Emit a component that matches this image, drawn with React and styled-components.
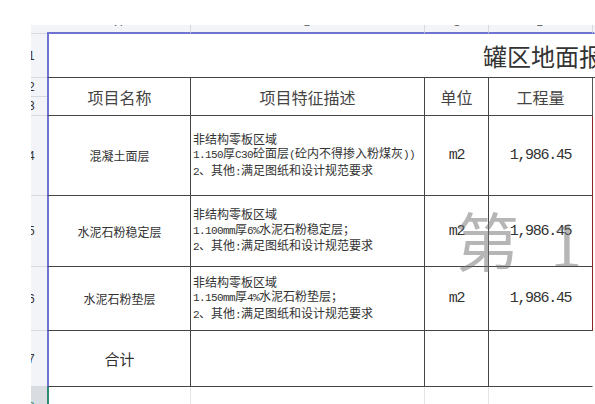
import React from "react";
import styled, { createGlobalStyle } from "styled-components";

const Global = createGlobalStyle`
  html, body { margin: 0; padding: 0; background: #fff; overflow: hidden; }
  body { font-family: "Noto Sans CJK SC", "Liberation Sans", sans-serif; color: #333; }
`;

const CJK = `"Noto Sans CJK SC", "Noto Sans CJK JP", sans-serif`;
const MONO = `"Liberation Mono", "Noto Sans CJK SC", monospace`;
const LINE = "#454545";
const BLUE = "#6f73d2";
const HDR_BG = "#f3f4f7";
const HDR_LINE = "#d6d9de";

const Page = styled.div`
  width: 595px;
  height: 404px;
  box-sizing: border-box;
  padding: 25px 0 0 31px;
  overflow: hidden;
`;

const Sheet = styled.div`
  position: relative;
  width: 564px;
  display: grid;
  grid-template-columns: 16px 144px 234px 64px 104px 1fr;
  grid-template-rows: 9px 44px 19px 19px 80px 71px 64px 56px 40px;
  & > * { box-sizing: border-box; min-width: 0; }
`;

const Corner = styled.div`
  background: ${HDR_BG};
  border-bottom: 1px solid ${HDR_LINE};
`;

const ColHead = styled.div`
  background: ${HDR_BG};
  border-right: 1px solid ${(p) => (p.$last ? "transparent" : HDR_LINE)};
  border-bottom: 2px solid ${BLUE};
  display: flex;
  justify-content: center;
  align-items: flex-start;
  overflow: hidden;
`;

const ColLetter = styled.span`
  font-family: "Liberation Sans", sans-serif;
  font-size: 11px;
  line-height: 11px;
  margin-top: -8px;
  color: #555;
`;

const RowHead = styled.div`
  background: ${(p) => (p.$active ? "#d9dce1" : HDR_BG)};
  border-bottom: 1px solid ${HDR_LINE};
  display: flex;
  align-items: center;
  overflow: hidden;
  color: ${(p) => (p.$active ? "#1f8a6e" : "#333")};
  font-family: "Liberation Sans", sans-serif;
  font-size: 12px;
`;

const RowNum = styled.span`
  margin-left: -3px;
`;

const Title = styled.div`
  grid-column: span 5;
  border-left: 2px solid ${BLUE};
  border-bottom: 1px solid ${LINE};
  display: flex;
  align-items: center;
  padding-left: 434px;
  white-space: nowrap;
  overflow: hidden;
  font-family: ${CJK};
  font-size: 24px;
  color: #333;
`;

const Cell = styled.div`
  border-right: 1px solid ${(p) => p.$rc || LINE};
  border-bottom: 1px solid ${LINE};
  border-left: ${(p) => (p.$first ? `2px solid ${BLUE}` : "none")};
  display: flex;
  align-items: center;
  justify-content: center;
  color: #333;
`;

const HeadCell = styled(Cell)`
  grid-row: span 2;
  font-family: ${CJK};
  font-size: 16px;
  color: #444;
`;

const NameCell = styled(Cell)`
  font-family: ${CJK};
  font-size: ${(p) => (p.$big ? "15px" : "12px")};
`;

const DescCell = styled(Cell)`
  flex-direction: column;
  align-items: flex-start;
  justify-content: center;
  padding-left: 2px;
  font-family: ${CJK};
  font-size: 12px;
  line-height: 14.5px;
  white-space: nowrap;
  overflow: hidden;
`;

const Lat = styled.span`
  font-family: "Liberation Mono", monospace;
  font-size: 11px;
  letter-spacing: -0.6px;
`;

const NumCell = styled(Cell)`
  font-family: ${MONO};
  font-size: 15px;
  letter-spacing: -1.3px;
`;

const Void = styled.div`
  grid-row: span ${(p) => p.$span || 1};
`;

const Blank = styled.div`
  border-right: 1px solid ${(p) => (p.$last ? "transparent" : "#e3e5e9")};
  border-left: ${(p) => (p.$first ? "2px solid #2c8a72" : "none")};
`;

const Watermark = styled.div`
  position: absolute;
  left: 424px;
  top: 181px;
  display: flex;
  align-items: baseline;
  line-height: 64px;
  font-size: 64px;
  color: rgba(110, 110, 110, 0.5);
  pointer-events: none;
`;

const WmChar = styled.span`
  font-family: ${CJK};
`;

const WmNum = styled.span`
  font-family: "Liberation Serif", serif;
  margin-left: 31px;
`;

function Mixed({ text }) {
  const parts = text.split(/([\x00-\x7F]+)/).filter(Boolean);
  return (
    <div>
      {parts.map((p, i) =>
        /^[\x00-\x7F]+$/.test(p) ? <Lat key={i}>{p}</Lat> : <span key={i}>{p}</span>
      )}
    </div>
  );
}

const rows = [
  {
    n: "4",
    name: "混凝土面层",
    desc: ["非结构零板区域", "1.150厚C30砼面层(砼内不得掺入粉煤灰))", "2、其他:满足图纸和设计规范要求"],
  },
  {
    n: "5",
    name: "水泥石粉稳定层",
    desc: ["非结构零板区域", "1.100mm厚6%水泥石粉稳定层；", "2、其他:满足图纸和设计规范要求"],
  },
  {
    n: "6",
    name: "水泥石粉垫层",
    desc: ["非结构零板区域", "1.150mm厚4%水泥石粉垫层；", "2、其他:满足图纸和设计规范要求"],
  },
];

const RED = "#8a2323";

export default function App() {
  return (
    <>
      <Global />
      <Page>
        <Sheet>
          <Corner />
          {["A", "B", "C", "D"].map((c) => (
            <ColHead key={c}>
              <ColLetter>{c}</ColLetter>
            </ColHead>
          ))}
          <ColHead $last />

          <RowHead><RowNum>1</RowNum></RowHead>
          <Title>罐区地面报价表</Title>

          <RowHead><RowNum>2</RowNum></RowHead>
          <HeadCell $first>项目名称</HeadCell>
          <HeadCell>项目特征描述</HeadCell>
          <HeadCell>单位</HeadCell>
          <HeadCell $rc="#555">工程量</HeadCell>
          <Void $span={2} />
          <RowHead><RowNum>3</RowNum></RowHead>

          {rows.map((r) => (
            <React.Fragment key={r.n}>
              <RowHead><RowNum>{r.n}</RowNum></RowHead>
              <NameCell $first>{r.name}</NameCell>
              <DescCell>
                {r.desc.map((d, i) => (
                  <Mixed key={i} text={d} />
                ))}
              </DescCell>
              <NumCell>m2</NumCell>
              <NumCell $rc={RED}>1,986.45</NumCell>
              <Void />
            </React.Fragment>
          ))}

          <RowHead><RowNum>7</RowNum></RowHead>
          <NameCell $first $big>合计</NameCell>
          <Cell />
          <Cell />
          <Cell $rc="transparent" />
          <Void />

          <RowHead $active><RowNum>8</RowNum></RowHead>
          <Blank $first />
          <Blank />
          <Blank />
          <Blank $last />
          <Void />

          <Watermark>
            <WmChar>第</WmChar>
            <WmNum>1</WmNum>
          </Watermark>
        </Sheet>
      </Page>
    </>
  );
}
